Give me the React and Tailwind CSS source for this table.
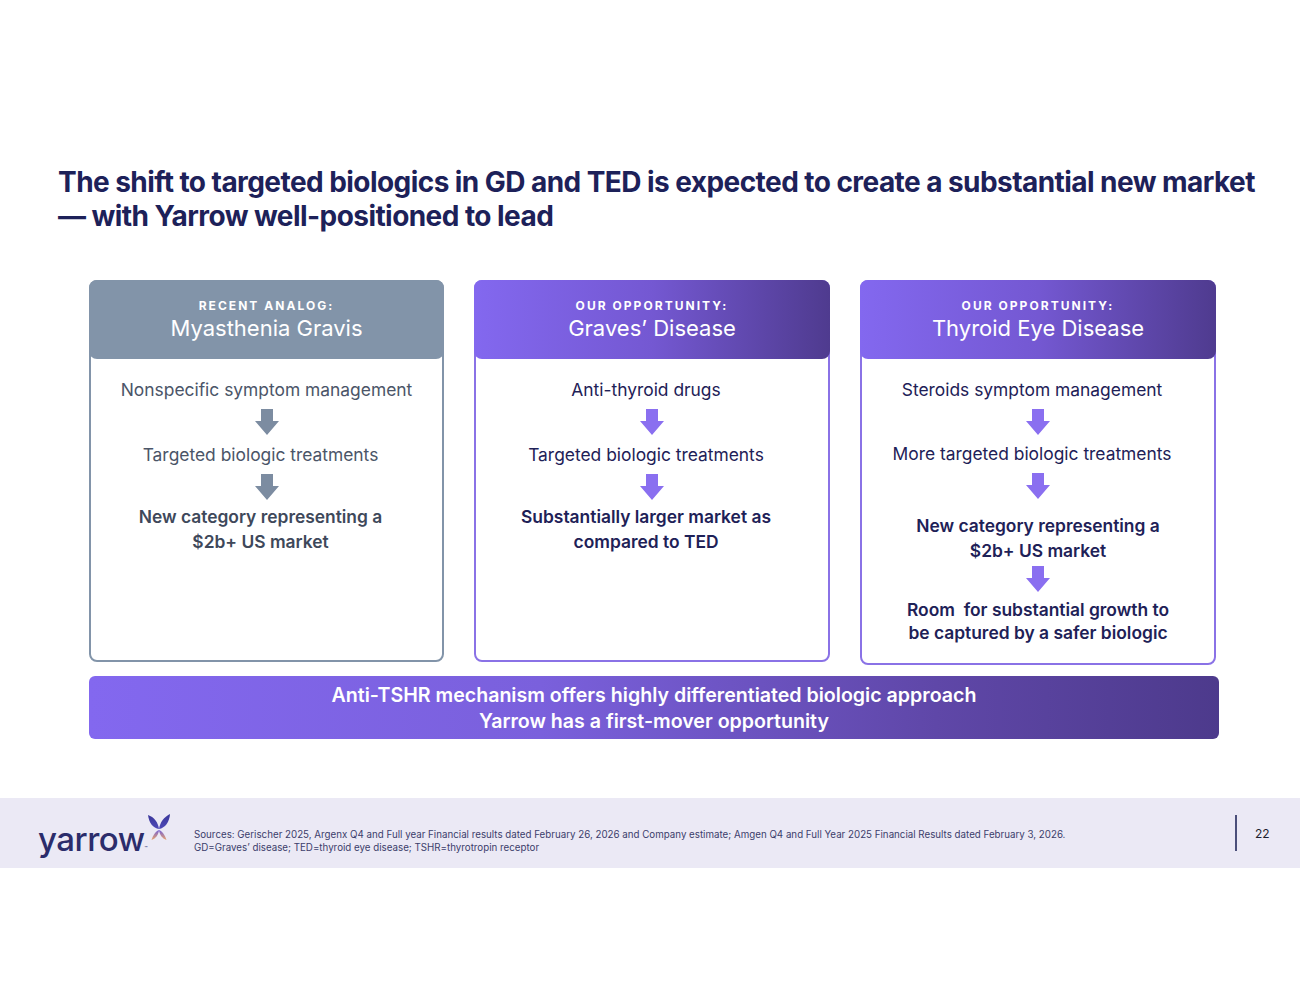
import React from "react";

const font = { fontFamily: "Inter, 'Noto Sans', sans-serif" };

function Arrow({ color }) {
  return (
    <svg width="26" height="26" viewBox="0 0 26 26" className="block">
      <path d="M7 0 H19 V12 H25 L13 26 L1 12 H7 Z" fill={color} />
    </svg>
  );
}

function Logo() {
  return (
    <div className="flex items-end">
      <span className="text-[33px] leading-none font-medium text-[#2b2c6b] tracking-[-0.015em]" style={font}>
        yarrow
      </span>
      <span className="text-[5px] text-[#2b2c6b] mb-[4px]">™</span>
      <svg width="24" height="28" viewBox="0 0 24 28" className="mb-[14px] -ml-[1px]">
        <defs>
          <linearGradient id="lp" x1="0" y1="0" x2="0" y2="1">
            <stop offset="0" stopColor="#7560d6" />
            <stop offset="1" stopColor="#eaa56a" />
          </linearGradient>
          <linearGradient id="lt" x1="0" y1="0" x2="0" y2="1">
            <stop offset="0" stopColor="#3a379a" />
            <stop offset="1" stopColor="#4f49b8" />
          </linearGradient>
        </defs>
        <path d="M1 1 C7 3 11 8 12 15 C6 14 2 9 1 1 Z" fill="url(#lt)" />
        <path d="M23 0 C17 3 13 8 12 15 C18 14 22.5 8 23 0 Z" fill="url(#lt)" />
        <path d="M12 16 C9 17 6 21 4.5 26 C9 24.5 11.5 20.5 12 16 Z" fill="url(#lp)" />
        <path d="M12 16 C15 17 18 21 19.5 26 C15 24.5 12.5 20.5 12 16 Z" fill="url(#lp)" />
      </svg>
    </div>
  );
}

function Card({ gray, label, title, children, h }) {
  const border = gray ? "border-[#8294a9]" : "border-[#8a72e6]";
  const header = gray
    ? "bg-[#8294a9]"
    : "bg-[linear-gradient(90deg,#8368ef_0%,#7458d2_50%,#4f3b8f_100%)]";
  return (
    <div className={`flex flex-col border-2 ${border} rounded-[8px] ${h} bg-white`}>
      <div className={`-mx-[2px] -mt-[2px] h-[79px] rounded-[8px] ${header} flex flex-col items-center justify-center text-white`}>
        <div className="text-[12px] leading-[16px] font-bold tracking-[0.17em] mt-[1px]" style={font}>{label}</div>
        <div className="text-[22px] leading-[28px] font-normal" style={font}>{title}</div>
      </div>
      <div className="flex flex-col items-center pt-[18px]">{children}</div>
    </div>
  );
}

function Line({ children, color, bold, shift = true, extra = "", lead = "leading-[25px]" }) {
  return (
    <div
      className={`w-full text-center text-[17.4px] ${lead} ${bold ? "font-semibold" : "font-normal"} ${shift ? "pr-[12px]" : ""} ${extra}`}
      style={{ ...font, color }}
    >
      {children}
    </div>
  );
}

function Gap({ color, pb = "pb-[7px]" }) {
  return (
    <div className={`pt-[7px] ${pb}`}>
      <Arrow color={color} />
    </div>
  );
}

export default function App() {
  const g = "#4b5568";
  const gb = "#3e485a";
  const ga = "#7c8ca1";
  const n = "#1e2157";
  const pa = "#8a6ff0";
  return (
    <div className="w-[1300px] h-[1005px] bg-white flex flex-col" style={font}>
      <div className="pt-[165px] pl-[58px] pr-[30px]">
        <h1 className="text-[28px] leading-[34px] font-bold text-[#1d2159] tracking-[-0.02em]" style={font}>
          The shift to targeted biologics in GD and TED is expected to create a substantial new market
          <br />— with Yarrow well-positioned to lead
        </h1>
      </div>

      <div className="mt-[47px] pl-[89px] flex gap-[30px] items-start">
        <div className="w-[355px]">
          <Card gray label="RECENT ANALOG:" title="Myasthenia Gravis" h="h-[382px]">
            <Line color={g} shift={false}>Nonspecific symptom management</Line>
            <Gap color={ga} />
            <Line color={g}>Targeted biologic treatments</Line>
            <Gap color={ga} pb="pb-[4px]" />
            <Line color={gb} bold>
              New category representing a<br />$2b+ US market
            </Line>
          </Card>
        </div>
        <div className="w-[356px]">
          <Card label="OUR OPPORTUNITY:" title="Graves’ Disease" h="h-[382px]">
            <Line color={n}>Anti-thyroid drugs</Line>
            <Gap color={pa} />
            <Line color={n}>Targeted biologic treatments</Line>
            <Gap color={pa} pb="pb-[4px]" />
            <Line color={n} bold>
              Substantially larger market as<br />compared to TED
            </Line>
          </Card>
        </div>
        <div className="w-[356px]">
          <Card label="OUR OPPORTUNITY:" title="Thyroid Eye Disease" h="h-[385px]">
            <Line color={n}>Steroids symptom management</Line>
            <Gap color={pa} pb="pb-[6px]" />
            <Line color={n}>More targeted biologic treatments</Line>
            <Gap color={pa} />
            <Line color={n} bold shift={false} extra="mt-[7px]">
              New category representing a<br />$2b+ US market
            </Line>
            <div className="pt-[3px] pb-[6px]">
              <Arrow color={pa} />
            </div>
            <Line color={n} bold shift={false} lead="leading-[23px]">
              Room&nbsp; for substantial growth to<br />be captured by a safer biologic
            </Line>
          </Card>
        </div>
      </div>

      <div className="mt-[11px] ml-[89px] w-[1130px] h-[63px] rounded-[6px] bg-[linear-gradient(90deg,#8368ef_0%,#7a60dc_40%,#5f47a8_75%,#4d3a8c_100%)] flex flex-col items-center justify-center text-white">
        <div className="text-[19.6px] leading-[26px] font-semibold" style={font}>
          Anti-TSHR mechanism offers highly differentiated biologic approach
        </div>
        <div className="text-[19.6px] leading-[26px] font-semibold" style={font}>
          Yarrow has a first-mover opportunity
        </div>
      </div>

      <div className="mt-[59px] h-[70px] bg-[#ebe9f5] flex items-center">
        <div className="pl-[38px] w-[194px] shrink-0 pt-[4px]">
          <Logo />
        </div>
        <div className="flex-1 text-[9.75px] leading-[13px] text-[#3b3d6b] pt-[16px]" style={font}>
          <div>
            Sources: Gerischer 2025, Argenx Q4 and Full year Financial results dated February 26, 2026 and Company estimate; Amgen Q4 and Full Year 2025 Financial Results dated February 3, 2026.
          </div>
          <div>GD=Graves’ disease; TED=thyroid eye disease; TSHR=thyrotropin receptor</div>
        </div>
        <div className="w-[2px] h-[36px] bg-[#4b4f7a] mr-[18px]" />
        <div className="w-[45px] text-[12px] text-[#1e1e2e] mt-[2px]" style={font}>22</div>
      </div>
    </div>
  );
}
